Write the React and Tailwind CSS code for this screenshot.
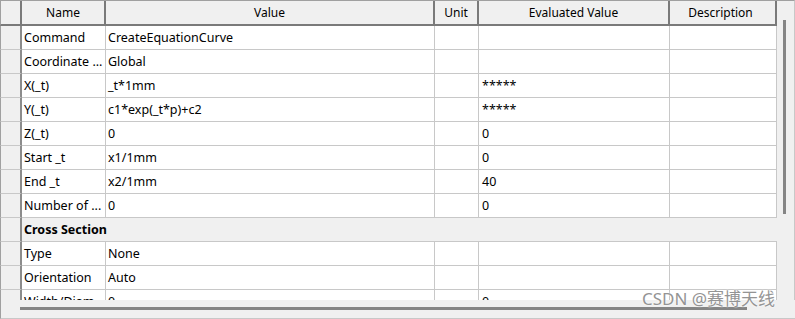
import React from "react";

const cols = [
  { w: "w-[84px]", key: "name" },
  { w: "w-[329px]", key: "value" },
  { w: "w-[44px]", key: "unit" },
  { w: "w-[191px]", key: "eval" },
  { w: "w-[107px]", key: "desc" },
];

const rows = [
  ["Command", "CreateEquationCurve", "", "", ""],
  ["Coordinate ...", "Global", "", "", ""],
  ["X(_t)", "_t*1mm", "", "*****", ""],
  ["Y(_t)", "c1*exp(_t*p)+c2", "", "*****", ""],
  ["Z(_t)", "0", "", "0", ""],
  ["Start _t", "x1/1mm", "", "0", ""],
  ["End _t", "x2/1mm", "", "40", ""],
  ["Number of ...", "0", "", "0", ""],
  "section",
  ["Type", "None", "", "", ""],
  ["Orientation", "Auto", "", "", ""],
  ["Width/Diam...", "0", "", "0", ""],
];

function RowHead() {
  return (
    <div className="w-[22px] shrink-0 h-full border-l border-l-[#a0a0a0] border-r-2 border-r-[#8c8c8c] border-b border-b-[#c8c8c8] bg-[#f0f0f0]" />
  );
}

export default function App() {
  const headers = ["Name", "Value", "Unit", "Evaluated Value", "Description"];
  return (
    <div
      className="relative w-[795px] h-[319px] overflow-hidden bg-white text-[12.5px] text-black leading-none"
      style={{ fontFamily: '"Noto Sans", "Noto Sans CJK SC", sans-serif' }}
    >
      <div className="flex h-[300px]">
        <div className="w-[777px] h-[300px] overflow-hidden flex flex-col">
          {/* header */}
          <div className="flex h-[26px] shrink-0 border-t border-t-[#a0a0a0] bg-[#f0f0f0] text-[12px]">
            <div className="w-[22px] shrink-0 border-l border-l-[#a0a0a0] border-r-2 border-r-[#7a7a7a] border-b-2 border-b-[#7a7a7a]" />
            {headers.map((h, i) => (
              <div
                key={h}
                className={`${cols[i].w} shrink-0 flex items-center justify-center border-r-2 border-r-[#7a7a7a] border-b-2 border-b-[#7a7a7a] ${i === 4 ? "pr-[4px]" : ""}`}
              >
                {h}
              </div>
            ))}
          </div>
          {rows.map((r, idx) =>
            r === "section" ? (
              <div key={idx} className="flex h-[24px] shrink-0">
                <RowHead />
                <div className="w-[755px] shrink-0 flex items-center pl-[2px] pt-px bg-[#f0f0f0] border-b border-b-[#c8c8c8] font-bold">
                  Cross Section
                </div>
              </div>
            ) : (
              <div key={idx} className="flex h-[24px] shrink-0">
                <RowHead />
                {r.map((c, i) => (
                  <div
                    key={i}
                    className={`${cols[i].w} shrink-0 flex items-center whitespace-nowrap overflow-hidden pt-px ${i === 3 ? "pl-[3px]" : "pl-[2px]"} border-r border-r-[#c8c8c8] border-b border-b-[#c8c8c8]`}
                  >
                    {c}
                  </div>
                ))}
              </div>
            )
          )}
        </div>
        {/* vertical scrollbar */}
        <div className="w-[18px] h-[300px] bg-[#f0f0f0] border-t border-t-[#a0a0a0] border-r border-r-[#c8c8c8] relative">
          <div className="absolute left-[6px] top-[19px] w-[3px] h-[194px] bg-[#858585]" />
        </div>
      </div>
      {/* horizontal scrollbar */}
      <div className="relative h-[19px] bg-[#f0f0f0] border-l border-l-[#a0a0a0] border-b border-b-[#c8c8c8]">
        <div className="absolute top-[7px] left-[19px] w-[727px] h-[3px] bg-[#858585]" />
      </div>
      <div
        className="absolute left-[642px] top-[290px] text-[17px] text-[#949494] whitespace-nowrap"
        style={{ fontFamily: '"Noto Sans", "Noto Sans CJK SC", sans-serif', textShadow: "0 0 2px #fff, 0 0 1px #fff" }}
      >
        CSDN @赛博天线
      </div>
    </div>
  );
}
